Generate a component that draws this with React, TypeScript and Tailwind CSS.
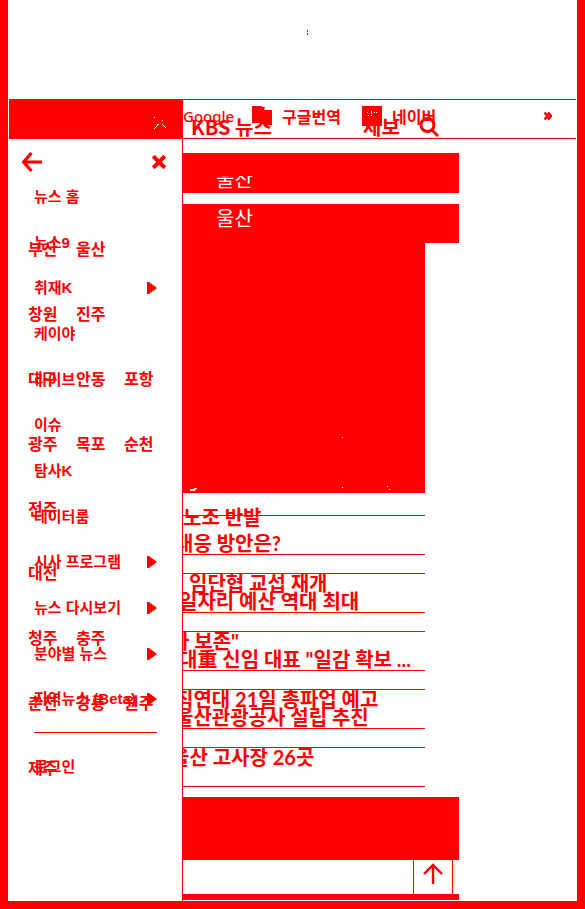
import React from "react";

const menu: { label: string; more?: boolean }[] = [
  { label: "뉴스 홈" },
  { label: "뉴스9" },
  { label: "취재K", more: true },
  { label: "케이야" },
  { label: "라이브" },
  { label: "이슈" },
  { label: "탐사K" },
  { label: "데이터룸" },
  { label: "시사 프로그램", more: true },
  { label: "뉴스 다시보기", more: true },
  { label: "분야별 뉴스", more: true },
  { label: "지역뉴스 (Beta)", more: true },
];

const regions = [
  ["부산", "울산"],
  ["창원", "진주"],
  ["대구", "안동", "포항"],
  ["광주", "목포", "순천"],
  ["전주"],
  ["대전"],
  ["청주", "충주"],
  ["춘천", "강릉", "원주"],
  ["제주"],
];

const upper = [
  { text: "임단협 교섭 재개", shift: "ml-1.5" },
  { text: "가 보존\"", shift: "-ml-3" },
  { text: "직연대 21일 총파업 예고", shift: "-ml-2" },
  { text: "울산 고사장 26곳", shift: "-ml-3" },
];

const lower = [
  { text: "대응 방안은?", shift: "-ml-2" },
  { text: "일자리 예산 역대 최대", shift: "-ml-1" },
  { text: "대重 신임 대표 \"일감 확보 ...", shift: "-ml-1" },
  { text: "울산관광공사 설립 추진", shift: "-ml-2" },
  { text: "", shift: "" },
];

function Cross({ className }: { className: string }) {
  return (
    <svg className={className} viewBox="0 0 14 14" fill="none" stroke="currentColor" strokeWidth="4">
      <path d="M1.200 1.200 12.800 12.800M12.800 1.200 1.200 12.800" />
    </svg>
  );
}

function TopBar() {
  return (
    <header className="grid h-10 grid-cols-[174px_1fr] border-y border-[#ff0000]">
      <div className="flex items-center justify-end bg-[#ff0000] pr-4 pt-2 text-white">
        <svg className="h-3 w-3.5" viewBox="0 0 14 12" fill="currentColor">
          <path d="M1 0h1v1H1zM9 3h1v1H9zM4 7h2v1H5v1H4v1H3v1H2v1H1v-1h1v-1h1V9h1zM9 7h1v1h1v1h1v1h1v1h-1v-1h-1V9h-1V8H9z" />
        </svg>
      </div>
      <div className="grid">
        <nav className="col-start-1 row-start-1 flex h-8 items-center text-base font-bold">
          <a href="#google" className="w-[69px] font-['Noto_Sans',sans-serif] text-[15px] font-medium">Google</a>
          <a href="#translate" className="flex w-[110px] items-center gap-2.5">
            <svg className="h-5 w-5" viewBox="0 0 20 20" fill="currentColor">
              <path d="M0 0h9l2 1h2l-1 3h8v15h-7l-3-2H0z" />
            </svg>
            구글번역
          </a>
          <a href="#naver" className="flex items-center gap-2.5">
            <svg className="h-5 w-5" viewBox="0 0 20 20">
              <path fill="currentColor" d="M0 0h20v20H0z" />
              <path fill="#fff" d="M5 6h1v1H5zM9 5h1v3H9zM12 6h1v1h-1zM14 6h1v1h-1zM6 9h1v1H6zM9 9h1v1H9z" />
            </svg>
            네이버
          </a>
          <button type="button" aria-label="더보기" className="ml-auto mr-6">
            <svg className="h-2 w-2" viewBox="0 0 8 8" fill="none" stroke="currentColor" strokeWidth="2.500">
              <path d="M.5.5 3.5 4l-3 3.5M4 .5 7 4 4 7.500" />
            </svg>
          </button>
        </nav>
        <div className="col-start-1 row-start-1 flex items-center pl-2 pt-4 text-xl font-bold">
          <a href="#home" className="w-[172px] leading-5">KBS 뉴스</a>
          <a href="#report" className="w-[56px] leading-5">제보</a>
          <button type="button" aria-label="검색">
            <svg className="h-5 w-5" viewBox="0 0 20 20" fill="none" stroke="currentColor" strokeWidth="3">
              <circle cx="8.5" cy="8" r="6.500" />
              <path d="m13 13 6 6" />
            </svg>
          </button>
        </div>
      </div>
    </header>
  );
}

function SideMenu() {
  return (
    <aside className="grid w-[174px] shrink-0 content-start border-r border-[#ff0000]">
      <div className="col-start-1 row-start-1">
        <div className="flex h-[35px] items-center justify-between pb-px pl-3 pr-4 pt-3">
          <button type="button" aria-label="뒤로">
            <svg className="h-5 w-[22px]" viewBox="0 0 22 20" fill="none" stroke="currentColor" strokeWidth="3.200">
              <path d="M10.500 1 2.500 10l8 9M2 10h19" />
            </svg>
          </button>
          <button type="button" aria-label="닫기">
            <Cross className="h-3.5 w-3.5" />
          </button>
        </div>
        <ul className="flex h-[548px] flex-col px-[25px] text-[15px] font-bold leading-5">
          {menu.map((m) => (
            <li key={m.label} className="flex flex-1 items-center">
              <a href="#menu" className="flex w-full items-center justify-between whitespace-nowrap font-['Liberation_Sans','Noto_Sans_CJK_KR',sans-serif]">
                {m.label}
                {m.more && (
                  <svg className="h-3 w-2.5 shrink-0" viewBox="0 0 10 12" fill="currentColor">
                    <path d="M0 0h2l8 6-8 6H0z" />
                  </svg>
                )}
              </a>
            </li>
          ))}
        </ul>
        <div className="mx-[25px] mt-2.5 flex h-[68px] items-center border-t border-[#ff0000] text-[15px] font-bold">
          <a href="#login">로그인</a>
        </div>
      </div>
      <ul className="col-start-1 row-start-1 mt-[77px] flex h-[583px] flex-col pl-[19px] font-bold">
        {regions.map((row) => (
          <li key={row[0]} className="grid flex-1 grid-cols-[repeat(3,48px)] items-center">
            {row.map((name) => (
              <a key={name} href="#region">{name}</a>
            ))}
          </li>
        ))}
      </ul>
    </aside>
  );
}

function Headlines() {
  return (
    <section className="grid w-[242px] overflow-x-hidden whitespace-nowrap font-['Lato','Noto_Sans_CJK_KR',sans-serif] text-xl font-bold leading-[18px]">
      <div className="col-start-1 row-start-1">
        <div className="h-[23px] border-b border-[#ff0000]" />
        <ul>
          {lower.map((h, i) => (
            <li key={i} className={i < 4 ? "h-[58px] border-b border-[#ff0000]" : "h-[39px]"}>
              <div className="h-[39px] border-b border-[#ff0000] pt-[18px]">
                <a href="#news" className={h.shift}>{h.text}</a>
              </div>
            </li>
          ))}
        </ul>
      </div>
      <div className="col-start-1 row-start-1 pt-[15px]">
        <a href="#news" className="block h-[66px]">노조 반발</a>
        {upper.map((h) => (
          <div key={h.text} className="h-[58px] last:h-[18px]">
            <a href="#news" className={h.shift}>{h.text}</a>
          </div>
        ))}
      </div>
    </section>
  );
}

export default function App() {
  return (
    <div className="flex min-h-screen flex-col border-x-8 border-b-8 border-[#ff0000] bg-white px-px font-['Noto_Sans_CJK_KR',sans-serif] text-[#ff0000]">
      <div className="flex h-[99px] justify-center pl-[30px] pt-[30px]">
        <svg className="h-[5px] w-px" viewBox="0 0 1 5" fill="currentColor">
          <path d="M0 0h1v2H0zM0 3h1v2H0z" />
        </svg>
      </div>
      <TopBar />
      <div className="flex flex-1">
        <SideMenu />
        <main className="min-w-0 flex-1 pb-px pt-3.5">
          <div className="w-[276px]">
            <div className="h-10 bg-[#ff0000] pt-[23px]">
              <div className="flex h-[13px] items-end overflow-hidden pl-[33px]">
                <h2 className="text-xl font-normal leading-5 text-white">울산</h2>
              </div>
            </div>
            <div className="mt-[11px] h-[39px] bg-[#ff0000] pl-[33px] pt-1">
              <h2 className="text-xl font-normal leading-5 text-white">울산</h2>
            </div>
            <div className="flex h-[250px] w-[242px] items-end bg-[#ff0000] text-white">
              <svg className="h-[60px] w-full" viewBox="0 0 242 60" fill="currentColor">
                <path d="M7 56h4v-1h3v1h-1v1h-1v1H7zM159 4h1v1h-1zM159 54h1v1h-1zM204 53h1v1h-1zM206 56h1v1h-1z" />
              </svg>
            </div>
            <Headlines />
            <div className="mt-2.5 h-[63px] bg-[#ff0000]" />
            <div className="flex h-[34px] justify-end pr-1.5">
              <button type="button" aria-label="맨 위로" className="flex w-10 justify-center border-x border-[#ff0000] pt-[3px]">
                <svg className="h-[21px] w-5" viewBox="0 0 20 21" fill="none" stroke="currentColor" strokeWidth="2.400">
                  <path d="M1 11 10 2l9 9M10 2v19" />
                </svg>
              </button>
            </div>
            <div className="h-1.5 bg-[#ff0000]" />
          </div>
        </main>
      </div>
    </div>
  );
}
